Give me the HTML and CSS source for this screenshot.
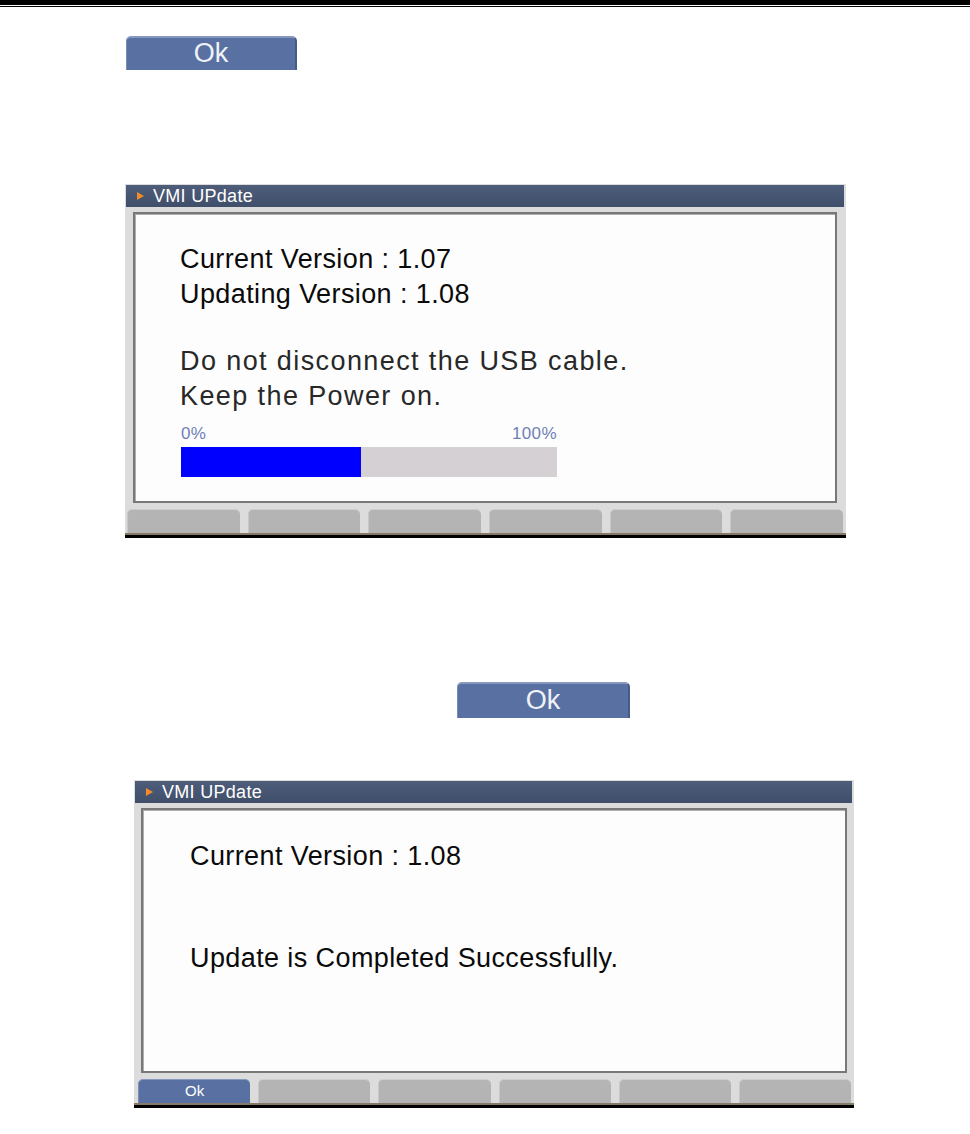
FILE: index.html
```html
<!DOCTYPE html>
<html lang="en">
<head>
    <meta charset="UTF-8">
    <meta name="viewport" content="width=device-width, initial-scale=1.0">
    <link rel="stylesheet" href="styles.css">
    <title>VMI UPdate</title>
</head>
<body>
    <div class="rule"></div>
    <div class="rule-thin"></div>

    <div class="ok-btn ok-top">Ok</div>

    <section class="panel panel-one">
        <div class="panel-head"><span class="arrow"></span>VMI UPdate</div>
        <div class="panel-body">
            <div class="screen">
                <p class="lines">Current Version : 1.07<br>Updating Version : 1.08</p>
                <p class="note">Do not disconnect the USB cable.<br>Keep the Power on.</p>
                <div class="progress">
                    <div class="progress-labels"><span>0%</span><span>100%</span></div>
                    <div class="progress-track">
                        <div class="progress-fill" style="width: 48%"></div>
                    </div>
                </div>
            </div>
        </div>
        <div class="softkeys">
            <span></span><span></span><span></span><span></span><span></span><span></span>
        </div>
    </section>

    <div class="ok-btn ok-mid">Ok</div>

    <section class="panel panel-two">
        <div class="panel-head"><span class="arrow"></span>VMI UPdate</div>
        <div class="panel-body">
            <div class="screen">
                <p class="lines">Current Version : 1.08</p>
                <p class="lines done">Update is Completed Successfully.</p>
            </div>
        </div>
        <div class="softkeys">
            <span class="key-ok">Ok</span><span></span><span></span><span></span><span></span><span></span>
        </div>
    </section>
</body>
</html>
```

FILE: styles.css
```css
body {
    margin: 0;
    font-family: 'Liberation Sans', Arial, sans-serif;
    background-color: white;
}

.rule {
    height: 5px;
    background-color: black;
}

.rule-thin {
    height: 1px;
    margin-top: 1px;
    background-color: black;
}

.ok-btn {
    box-sizing: border-box;
    background-color: rgb(88, 113, 162);
    border-top: 2px solid rgb(134, 152, 190);
    border-left: 1px solid rgb(120, 140, 180);
    border-right: 2px solid rgb(70, 92, 136);
    border-radius: 5px 5px 0 0;
    color: rgb(240, 242, 248);
    font-size: 27px;
    text-align: center;
}

.ok-top {
    width: 171px;
    height: 34px;
    line-height: 31px;
    margin: 29px 0 0 126px;
}

.ok-mid {
    width: 173px;
    height: 36px;
    line-height: 33px;
    margin: 144px 0 0 457px;
}

.panel {
    box-sizing: border-box;
    background-color: rgb(220, 220, 220);
    padding-top: 1px;
    border-bottom: 3px solid black;
}

.panel-one {
    width: 721px;
    margin: 114px 0 0 125px;
}

.panel-two {
    width: 720px;
    margin: 62px 0 0 134px;
}

.panel-head {
    display: flex;
    align-items: center;
    height: 22px;
    margin: 0 2px 0 1px;
    padding-left: 11px;
    background: linear-gradient(rgb(78, 93, 122), rgb(63, 78, 105));
    color: white;
    font-size: 18px;
    line-height: 22px;
    letter-spacing: 0.3px;
}

.arrow {
    width: 0;
    height: 0;
    margin-right: 9px;
    border-left: 7px solid rgb(242, 140, 40);
    border-top: 4px solid transparent;
    border-bottom: 4px solid transparent;
}

.panel-body {
    padding: 5px 9px 6px 8px;
}

.panel-two .panel-body {
    padding: 5px 7px 6px 7px;
}

.screen {
    box-sizing: border-box;
    height: 291px;
    padding: 28px 0 0 45px;
    background-color: rgb(253, 253, 253);
    border: 2px solid rgb(120, 120, 120);
    box-shadow: inset 1px 1px 0 rgb(175, 175, 175);
}

.panel-two .screen {
    height: 265px;
    padding: 29px 0 0 47px;
}

.lines {
    margin: 0;
    font-size: 27px;
    line-height: 35px;
    letter-spacing: 0.4px;
    color: rgb(10, 10, 10);
}

.lines.done {
    margin-top: 67px;
}

.note {
    margin: 32px 0 0;
    font-size: 27px;
    line-height: 35px;
    letter-spacing: 1.4px;
    color: rgb(40, 40, 40);
}

.progress {
    width: 376px;
    margin: 11px 0 0 1px;
}

.progress-labels {
    display: flex;
    justify-content: space-between;
    height: 18px;
    font-size: 17px;
    line-height: 18px;
    letter-spacing: 0.4px;
    color: rgb(111, 127, 181);
}

.progress-track {
    height: 30px;
    margin-top: 4px;
    background-color: rgb(212, 208, 212);
}

.progress-fill {
    height: 100%;
    background-color: rgb(0, 0, 255);
}

.softkeys {
    display: flex;
    gap: 8px;
    height: 24px;
    padding: 0 3px 0 2px;
    border-bottom: 2px solid rgb(133, 122, 104);
}

.panel-two .softkeys {
    padding: 0 3px 0 4px;
}

.softkeys span {
    flex: 1;
    box-sizing: border-box;
    background-color: rgb(180, 180, 180);
    border-top: 1px solid rgb(205, 205, 205);
    border-left: 1px solid rgb(200, 200, 200);
    border-radius: 5px 5px 0 0;
}

.softkeys .key-ok {
    background-color: rgb(88, 113, 162);
    border-top-color: rgb(134, 152, 190);
    border-left-color: rgb(120, 140, 180);
    color: white;
    font-size: 15px;
    line-height: 22px;
    text-align: center;
}
```
